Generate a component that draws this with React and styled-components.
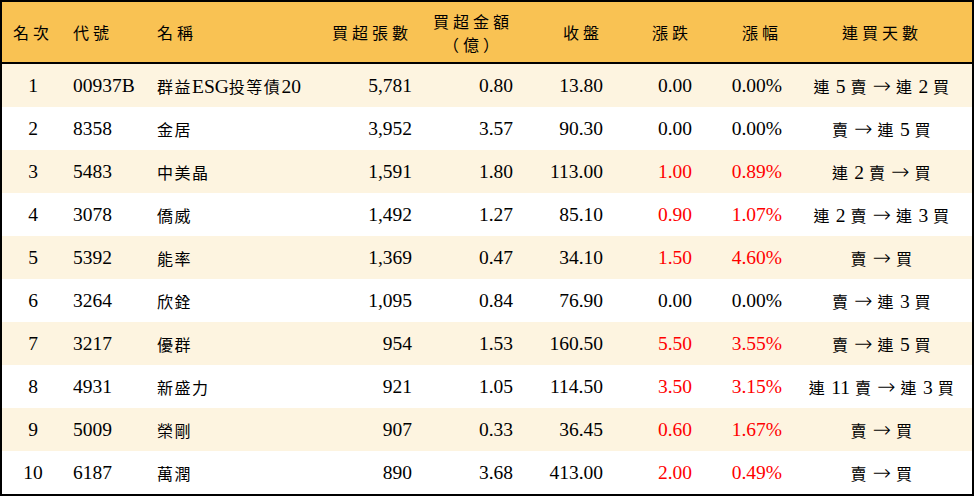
import styled, { createGlobalStyle } from "styled-components";

const GlobalStyle = createGlobalStyle`
  html, body {
    margin: 0;
    padding: 0;
    background: #ffffff;
  }
  body {
    font-family: "Liberation Serif", "Noto Sans CJK TC", serif;
    color: #000000;
  }
`;

const COLUMNS = "62px 84px 182px 92px 101px 90px 89px 90px 180px";

const Board = styled.div`
  box-sizing: border-box;
  width: 974px;
  height: 496px;
  border: 2px solid #000000;
  display: flex;
  flex-direction: column;
`;

const HeadRow = styled.div`
  display: grid;
  grid-template-columns: ${COLUMNS};
  height: 60px;
  background: #f9c253;
  border-bottom: 2px solid #000000;
`;

const Row = styled.div`
  display: grid;
  grid-template-columns: ${COLUMNS};
  height: 43px;
  background: ${({ striped }) => (striped ? "#fdf4e0" : "#ffffff")};
`;

const Cell = styled.div`
  display: flex;
  align-items: center;
  justify-content: ${({ align }) =>
    align === "left" ? "flex-start" : align === "right" ? "flex-end" : "center"};
  padding: ${({ align }) =>
    align === "left" ? "0 0 0 9px" : align === "right" ? "0 10px 0 0" : "0"};
  font-size: 19.5px;
  white-space: pre;
  color: ${({ red }) => (red ? "#ff0000" : "#000000")};
`;

const Line = styled.span`
  display: inline-block;
  line-height: ${({ lh }) => lh || "normal"};
`;

const Cjk = styled.span`
  font-family: "Noto Sans CJK TC", sans-serif;
  font-size: 16px;
  letter-spacing: ${({ spacing }) => spacing || "1.5px"};
`;

const Arrow = styled.span`
  font-family: "DejaVu Sans", sans-serif;
  font-size: 22px;
  font-weight: 300;
`;

const TwoLine = styled.div`
  display: flex;
  flex-direction: column;
  align-items: center;
  padding-top: 2px;
`;

const CJK_RE = /[\u3000-\u9fff\uff00-\uffef]/;

// split text into CJK, arrow and latin runs so each gets its own font
const Txt = ({ children, spacing, lh }) => {
  const parts =
    String(children).match(/→|[\u3000-\u9fff\uff00-\uffef]+|[^\u3000-\u9fff\uff00-\uffef→]+/g) || [];
  return (
    <Line lh={lh}>
      {parts.map((p, i) =>
        p === "→" ? (
          <Arrow key={i}>→</Arrow>
        ) : CJK_RE.test(p) ? (
          <Cjk key={i} spacing={spacing}>
            {p}
          </Cjk>
        ) : (
          <span key={i}>{p}</span>
        )
      )}
    </Line>
  );
};

const rows = [
  ["1", "00937B", "群益ESG投等債20", "5,781", "0.80", "13.80", "0.00", "0.00%", "連 5 賣 → 連 2 買"],
  ["2", "8358", "金居", "3,952", "3.57", "90.30", "0.00", "0.00%", "賣 → 連 5 買"],
  ["3", "5483", "中美晶", "1,591", "1.80", "113.00", "1.00", "0.89%", "連 2 賣 → 買"],
  ["4", "3078", "僑威", "1,492", "1.27", "85.10", "0.90", "1.07%", "連 2 賣 → 連 3 買"],
  ["5", "5392", "能率", "1,369", "0.47", "34.10", "1.50", "4.60%", "賣 → 買"],
  ["6", "3264", "欣銓", "1,095", "0.84", "76.90", "0.00", "0.00%", "賣 → 連 3 買"],
  ["7", "3217", "優群", "954", "1.53", "160.50", "5.50", "3.55%", "賣 → 連 5 買"],
  ["8", "4931", "新盛力", "921", "1.05", "114.50", "3.50", "3.15%", "連 11 賣 → 連 3 買"],
  ["9", "5009", "榮剛", "907", "0.33", "36.45", "0.60", "1.67%", "賣 → 買"],
  ["10", "6187", "萬潤", "890", "3.68", "413.00", "2.00", "0.49%", "賣 → 買"],
];

const HS = "4px";

export default function App() {
  return (
    <>
      <GlobalStyle />
      <Board>
        <HeadRow>
          <Cell><Txt spacing={HS}>名次</Txt></Cell>
          <Cell align="left"><Txt spacing={HS}>代號</Txt></Cell>
          <Cell align="left"><Txt spacing={HS}>名稱</Txt></Cell>
          <Cell align="right"><Txt spacing={HS}>買超張數</Txt></Cell>
          <Cell align="right">
            <TwoLine>
              <Txt spacing={HS} lh="22px">買超金額</Txt>
              <Txt spacing={HS} lh="22px">（億）</Txt>
            </TwoLine>
          </Cell>
          <Cell align="right"><Txt spacing={HS}>收盤</Txt></Cell>
          <Cell align="right"><Txt spacing={HS}>漲跌</Txt></Cell>
          <Cell align="right"><Txt spacing={HS}>漲幅</Txt></Cell>
          <Cell><Txt spacing={HS}>連買天數</Txt></Cell>
        </HeadRow>
        {rows.map((r, i) => {
          const up = parseFloat(r[6]) > 0;
          return (
            <Row key={r[0]} striped={i % 2 === 0}>
              <Cell>{r[0]}</Cell>
              <Cell align="left">{r[1]}</Cell>
              <Cell align="left"><Txt>{r[2]}</Txt></Cell>
              <Cell align="right">{r[3]}</Cell>
              <Cell align="right">{r[4]}</Cell>
              <Cell align="right">{r[5]}</Cell>
              <Cell align="right" red={up}>{r[6]}</Cell>
              <Cell align="right" red={up}>{r[7]}</Cell>
              <Cell><Txt>{r[8]}</Txt></Cell>
            </Row>
          );
        })}
      </Board>
    </>
  );
}
